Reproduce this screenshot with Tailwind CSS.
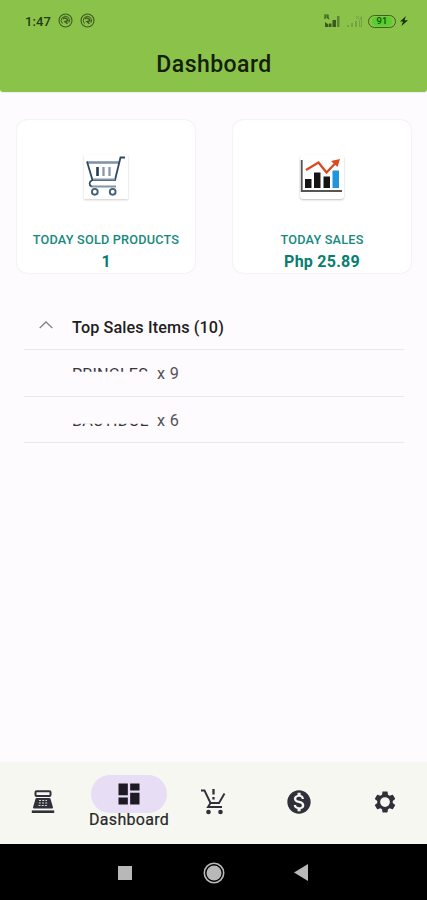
<!DOCTYPE html>
<html lang="en">
<head>
<meta charset="utf-8">
<title>Dashboard</title>
<script src="https://cdn.jsdelivr.net/npm/@tailwindcss/browser@4"></script>
</head>
<body class="w-[427px] h-[900px] overflow-hidden bg-black font-['Roboto',sans-serif]">
<div class="flex flex-col w-full h-full bg-[#fdfbfe]">
  <header class="h-[92px] shrink-0 bg-[#8bc34a] rounded-b-[3px] flex flex-col shadow-[0_1px_1px_rgba(0,0,0,0.06)]">
    <div class="h-[42px] flex items-center justify-between pl-[25px] pr-[19px]">
      <div class="flex items-center gap-[7px]">
        <span class="text-[13px] leading-none font-medium text-[#243c12] w-[26px] whitespace-nowrap tracking-[0.1px]">1:47</span>
        <svg class="w-[15px] h-[15px] -mt-px" viewBox="0 0 15 15" fill="none" stroke="#3c5a22"><circle cx="7.500" cy="7.500" r="6.500" stroke-width="1.100"/><path d="M4.500 10.500a4.200 4.200 0 1 1 6.500-.8" stroke-width="1"/><path d="M5 5.800c2-1.500 4.500-.4 5 1.900L7 8.500l2.500 2.300" stroke-width="1.500"/></svg>
        <svg class="w-[15px] h-[15px] -mt-px" viewBox="0 0 15 15" fill="none" stroke="#3c5a22"><circle cx="7.500" cy="7.500" r="6.500" stroke-width="1.100"/><path d="M4.500 10.500a4.200 4.200 0 1 1 6.500-.8" stroke-width="1"/><path d="M5 5.800c2-1.500 4.500-.4 5 1.900L7 8.500l2.500 2.300" stroke-width="1.500"/></svg>
      </div>
      <div class="flex items-center">
        <svg class="w-[17px] h-[14px]" viewBox="0 0 17 14"><path d="M1 5V1h3v2H1M3 3l2 2" fill="none" stroke="#3b5a22" stroke-width="1.200"/><path d="M1 13V8l3.500 2.500v2.500zM5 13v-3.500h2.500V13zM8.500 13V6H12v7z" fill="#3b5a22"/><path d="M13 13V2h2.500v11z" fill="#5c8434"/></svg>
        <svg class="w-[17px] h-[12px] ml-[5px]" viewBox="0 0 17 12" fill="#74a340"><path d="M1 12v-2h2v2zM5 12V8h2v4zM9 12V6h2v6z"/><path d="M13.500 11.500V5.500l2-4v10z" fill="none" stroke="#74a340"/><path d="m10 1 3 3m0-3-3 3" stroke="#74a340"/></svg>
        <div class="ml-[5px] w-[28px] h-[13px] rounded-full border border-[#35641b] py-px px-[3px]"><div class="w-full h-full rounded-full bg-[#55d02c] flex items-center justify-center text-[9.5px] leading-none font-medium text-[#204d12]">91</div></div>
        <svg class="w-[8px] h-[12px] ml-[4px]" viewBox="0 0 8 12"><path d="M6 1 0 6.500h3L1.500 11 8 5.200H4.500z" fill="#1c300c"/></svg>
      </div>
    </div>
    <h1 class="h-[44px] flex items-center justify-center text-[23px] leading-none font-medium tracking-[0.45px] pl-px text-[#14200a]">Dashboard</h1>
  </header>

  <main class="flex-1 flex flex-col">
    <section class="pt-[28px] pl-[17px] pr-[16px] flex justify-between">
      <article class="w-[178px] h-[153px] rounded-[10px] bg-white shadow-[0_0_2px_rgba(0,0,0,0.12)] flex flex-col items-center pt-[35px]">
        <svg class="w-[44px] h-[44px] bg-white shadow-[0_1px_2px_rgba(0,0,0,0.2)]" viewBox="0 0 44 44" fill="none">
          <path d="M3 7.500h32" stroke="#8295a8" stroke-width="2.600"/>
          <path d="M3 6.500 8.500 25H31l5.500-22.500H41" stroke="#2e4964" stroke-width="1.800"/>
          <path d="M9 24.500h22M7 31.500h25" stroke="#8295a8" stroke-width="2"/>
          <path d="M8.500 25c-4 2-3.500 5-1 6.500" stroke="#2e4964" stroke-width="1.700"/>
          <path d="M13.500 12v9" stroke="#263b56" stroke-width="2.600"/>
          <path d="M19.500 12v9M25.500 12v9" stroke="#8997aa" stroke-width="2.300"/>
          <circle cx="10.800" cy="36.800" r="2.900" stroke="#3f6078" stroke-width="1.900"/><circle cx="28.700" cy="36.800" r="2.900" stroke="#3f6078" stroke-width="1.900"/>
        </svg>
        <h2 class="mt-[34px] text-[12.7px] leading-[14px] font-medium tracking-[0.2px] text-[#16897c] whitespace-nowrap">TODAY SOLD PRODUCTS</h2>
        <p class="mt-[6px] text-[16px] leading-[18px] font-bold text-[#087d72]">1</p>
      </article>
      <article class="w-[178px] h-[153px] rounded-[10px] bg-white shadow-[0_0_2px_rgba(0,0,0,0.12)] flex flex-col items-center pt-[35px]">
        <svg class="w-[44px] h-[44px] rounded-[3px] bg-white shadow-[0_1px_2px_rgba(0,0,0,0.25)]" viewBox="0 0 44 44" fill="none">
          <path d="M1.700 5v31H42" stroke="#555" stroke-width="1.900"/>
          <path d="M5 24h6.500v9H5zM14 17.500h6.500V33H14zM23.500 21.500H30V33h-6.500z" fill="#151515"/>
          <path d="M32.500 15.500H39V33h-6.500z" fill="#2194db"/>
          <path d="m6 15 12.500-7.500 8 10L36 7.500" stroke="#d94a20" stroke-width="2.300"/><path d="m31 6 9-2-2.500 8z" fill="#d94a20"/>
        </svg>
        <h2 class="mt-[34px] text-[12.7px] leading-[14px] font-medium tracking-[0.2px] text-[#16897c] whitespace-nowrap">TODAY SALES</h2>
        <p class="mt-[6px] text-[16px] leading-[18px] font-bold tracking-[0.25px] text-[#087d72]">Php 25.89</p>
      </article>
    </section>

    <section class="mt-[32px] ml-[24px] w-[380px] text-[16.2px]">
      <div class="h-[45px] flex items-center border-b border-[#ebe9ed]">
        <svg class="w-[14px] h-[8px] ml-[15px] mr-[19px] -mt-[4px]" viewBox="0 0 14 8" fill="none" stroke="#858388" stroke-width="1.300"><path d="m.7 7 6.300-6 6.300 6"/></svg>
        <h3 class="pt-[2px] font-medium tracking-[0.12px] text-[#1f1d21]">Top Sales Items (10)</h3>
      </div>
      <div class="h-[47px] flex items-center border-b border-[#ebe9ed] pl-[48px] pt-[3px] text-[#555257]">
        <span class="w-[85px] pt-[2px] tracking-[0.15px] text-[#39363b] whitespace-nowrap [clip-path:inset(0_0_16px_0)]">PRINGLES</span><span class="tracking-[0.3px]">x 9</span>
      </div>
      <div class="h-[46px] flex items-center border-b border-[#ebe9ed] pl-[48px] pt-[3px] text-[#555257]">
        <span class="w-[85px] tracking-[0.15px] text-[#39363b] whitespace-nowrap [clip-path:inset(15px_0_0_0)]">BACTIDOL</span><span class="tracking-[0.3px]">x 6</span>
      </div>
    </section>
  </main>

  <nav class="h-[82px] shrink-0 bg-[#f6f7f0] grid grid-cols-5 justify-items-center text-[#30303a]">
    <div class="pt-[28px]"><svg class="w-[24px] h-[24px]" viewBox="0 0 24 24" fill="none" stroke="currentColor"><rect x="4.500" y="1.200" width="15" height="4.800" rx="1" stroke-width="2"/><path d="M5.500 9h13l2.500 8.500H3z" fill="currentColor" stroke-width="2" stroke-linejoin="round"/><path d="M8 10.500h8M7.800 13h8.500M7.500 15.500h9" stroke="#d5d6d2" stroke-width="1.200" stroke-dasharray="2 1.200"/><path d="M.8 21.700h22.400" stroke-width="2.600"/></svg></div>
    <div class="pt-[13px] pl-[2px] flex flex-col items-center"><div class="w-[76px] h-[38px] rounded-full bg-[#e7ddf5] flex items-center justify-center"><svg class="w-[28px] h-[28px]" viewBox="0 0 24 24" fill="#1d1a25"><path d="M3 13h8V3H3v10zm0 8h8v-6H3v6zm10 0h8V11h-8v10zm0-18v6h8V3h-8z"/></svg></div><span class="-mt-[3px] text-[16px] leading-[19px] tracking-[0.3px] text-[#28282a] [-webkit-text-stroke:0.2px]">Dashboard</span></div>
    <div class="pt-[27px]"><svg class="w-[26px] h-[26px]" viewBox="0 0 26 26" fill="none" stroke="currentColor"><path d="M1 1.500h3.500L10.500 14h8.500L24.500 4.500" stroke-width="1.900"/><path d="m10.500 14-2.500 4h14" stroke-width="1.900"/><path d="M13.500 0v5.500m0 2.500v2.500" stroke-width="2.300"/><circle cx="8.500" cy="23" r="2.300" fill="currentColor" stroke="none"/><circle cx="20.500" cy="23" r="2.300" fill="currentColor" stroke="none"/></svg></div>
    <div class="pt-[26px] pl-px"><svg class="w-[28px] h-[28px]" viewBox="0 0 24 24" fill="currentColor"><path d="M12 2C6.480 2 2 6.480 2 12s4.480 10 10 10 10-4.480 10-10S17.520 2 12 2zm1.410 16.090V20h-2.670v-1.930c-1.710-.36-3.160-1.460-3.270-3.400h1.960c.1 1.050.82 1.870 2.650 1.870 1.960 0 2.400-.98 2.400-1.590 0-.83-.44-1.610-2.670-2.140-2.480-.6-4.180-1.620-4.180-3.670 0-1.720 1.390-2.840 3.110-3.210V4h2.670v1.950c1.860.45 2.790 1.860 2.850 3.390H14.300c-.05-1.110-.64-1.870-2.220-1.870-1.500 0-2.400.68-2.400 1.640 0 .84.65 1.390 2.670 1.910s4.180 1.390 4.180 3.910c-.01 1.830-1.380 2.830-3.120 3.160z"/></svg></div>
    <div class="pt-[27px] pl-[2px]"><svg class="w-[26px] h-[26px]" viewBox="0 0 24 24" fill="currentColor"><path fill-rule="evenodd" d="M19.140 12.940c.04-.3.060-.61.060-.94 0-.32-.02-.64-.07-.94l2.030-1.580c.18-.14.23-.41.120-.61l-1.920-3.320c-.12-.22-.37-.29-.59-.22l-2.390.96c-.5-.38-1.030-.7-1.620-.94l-.36-2.540c-.04-.24-.24-.41-.48-.41h-3.840c-.24 0-.43.17-.47.410l-.36 2.540c-.59.24-1.130.57-1.620.94l-2.390-.96c-.22-.08-.47 0-.59.220L2.740 8.870c-.12.21-.08.47.120.610l2.030 1.580c-.05.3-.09.63-.09.940s.02.64.070.940l-2.030 1.580c-.18.14-.23.41-.12.610l1.920 3.320c.12.22.37.29.590.220l2.390-.96c.5.38 1.030.7 1.620.940l.36 2.540c.05.24.24.41.480.410h3.840c.24 0 .44-.17.470-.410l.36-2.540c.59-.24 1.130-.56 1.620-.940l2.390.96c.22.08.47 0 .590-.220l1.920-3.320c.12-.22.070-.47-.12-.610zM12 16.500a4.500 4.500 0 1 1 0-9 4.500 4.500 0 0 1 0 9z"/></svg></div>
  </nav>

  <footer class="h-[56px] shrink-0 bg-black flex items-center">
    <div class="w-[14px] h-[14px] ml-[118px] mt-[1px] bg-[#b8b8b8]"></div>
    <svg class="w-[22px] h-[22px] ml-[71px] mt-[1px]" viewBox="0 0 22 22"><circle cx="11" cy="11" r="7.500" fill="#b8b8b8"/><circle cx="11" cy="11" r="9.700" fill="none" stroke="#b8b8b8" stroke-width="1.600"/></svg>
    <svg class="w-[14px] h-[17px] ml-[69px] mt-[1px]" viewBox="0 0 14 17"><path d="M14 0v17L0 8.500z" fill="#b8b8b8"/></svg>
  </footer>
</div>
</body>
</html>
